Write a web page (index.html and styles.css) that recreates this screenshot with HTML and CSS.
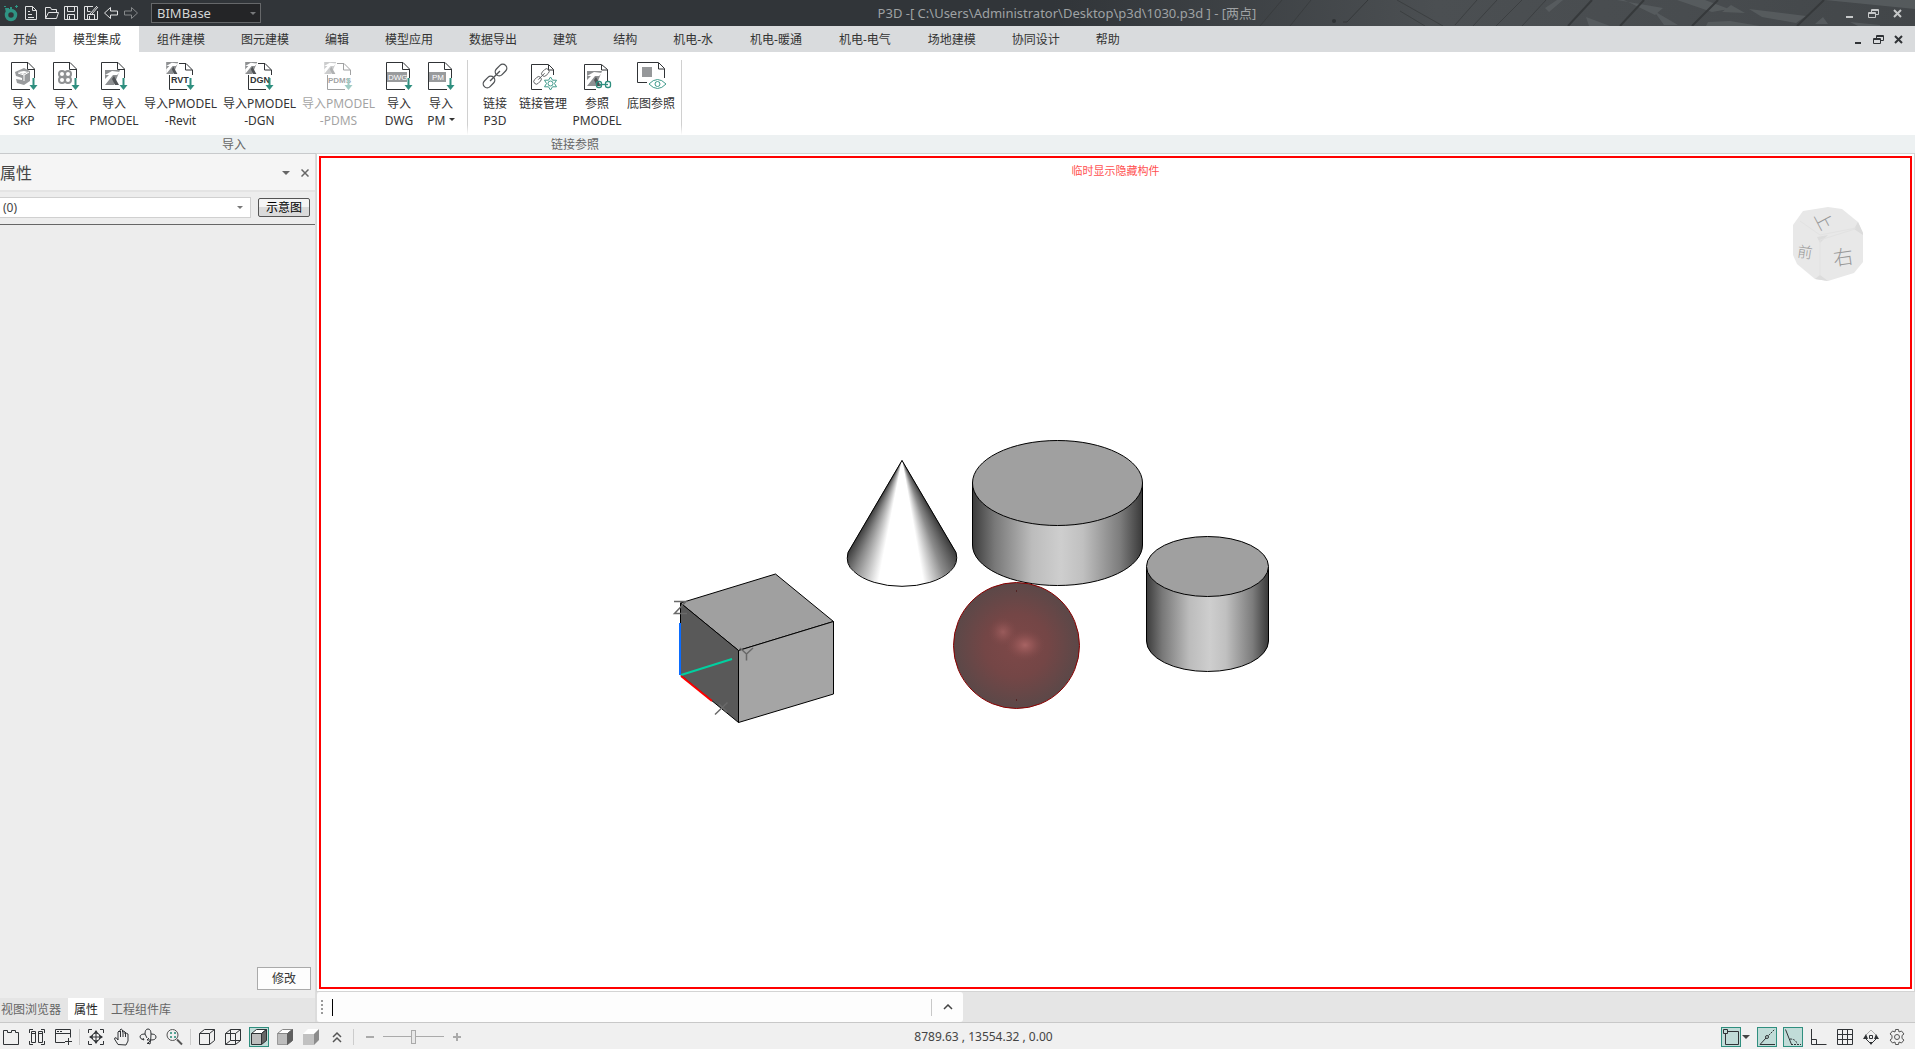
FILE: index.html
```html
<!DOCTYPE html>
<html lang="zh-CN">
<head>
<meta charset="utf-8">
<title>P3D - BIMBase</title>
<link rel="stylesheet" href="styles.css">
</head>
<body>
<svg class="defs" width="0" height="0" aria-hidden="true">
  <defs>
    <g id="arrow-down"><path d="M23.500 16v9" stroke="#2f8f7f" stroke-width="2"/><path d="M19.500 23h8l-4 5z" fill="#2f8f7f"/></g>
    <g id="page"><path d="M20 27.500H1.500V.500H18L24.500 7v9M17.500 1v6.500H24" fill="none" stroke="#303336"/></g>
    <g id="hammer"><path d="M0 0h15L9 15H0z" fill="#8e9092"/><path d="M0 5l7-4 8 1-3 3-4 0-8 10V9l4-4z" fill="#fff"/><path d="M9 6l5 9h-4L7 9z" fill="#505356"/></g>
    <g id="restore"><path d="M3.500 3V.500h7v5H8M.500 3.500h7v5h-7zM3 1.500h8M0 4.500h8" fill="none" stroke="currentColor"/></g>
    <g id="link"><g transform="translate(13 13) rotate(-45)" fill="none" stroke="#505356" stroke-width="1.300"><rect x="-15" y="-4" width="13" height="8" rx="4"/><rect x="2" y="-4" width="13" height="8" rx="4"/><path d="M-7 0H7"/></g></g>
    <g id="tagged-page"><path d="M12 1.500h7L25.500 8v5M18.500 1v7H25M2.500 13v14.500H20" fill="none" stroke="#303336"/><g transform="scale(.8)"><use href="#hammer" x="-1" y="0"/></g></g>
    <linearGradient id="cyl"><stop offset="0" stop-color="#3c3c3c"/><stop offset=".13" stop-color="#787878"/><stop offset=".35" stop-color="#bcbcbc"/><stop offset=".52" stop-color="#cecece"/><stop offset=".65" stop-color="#c0c0c0"/><stop offset=".87" stop-color="#7c7c7c"/><stop offset="1" stop-color="#393939"/></linearGradient>
    <radialGradient id="ball"><stop offset="0" stop-color="#7e4848"/><stop offset=".5" stop-color="#744646"/><stop offset="1" stop-color="#5b4848"/></radialGradient>
    <radialGradient id="shine"><stop offset="0" stop-color="#a86464"/><stop offset=".4" stop-color="#985858" stop-opacity=".7"/><stop offset="1" stop-color="#7e4848" stop-opacity="0"/></radialGradient>
  </defs>
</svg>

<header class="titlebar">
  <svg class="titlebar-art" viewBox="0 0 700 26" preserveAspectRatio="xMaxYMid slice" aria-hidden="true">
    <g fill="#5a5f62"><path d="M402 0l46 8-8 7-31-15zM462 0h28l24 9-17 3zM507 12l9-7 14 8zM534 9l57 7-10 7-34-6zM493 22l22-1 30 5h-54zM610 0h90v9zM600 24l8-7 5 7zM635 22l30 3v1h-22zM439 11l24 14h-14zM371 17l24 9h-21zM330 8l12-8 6 0-14 12z" opacity=".8"/></g>
    <g fill="none" stroke="#36393b"><path d="M185 11l25 15M240 25l22-25M258 26l24-26M281 26l26-26M307 26l24-26M96 0L75 26M67 0L45 26M182 0l46 26" opacity=".7"/><path d="M353 26l24-26M405 26l24-26M477 26l26-26M582 26l27-26" stroke-width="2"/><path d="M128 22h4l21-22" stroke-width="1"/></g>
    <circle cx="119" cy="21" r="2" fill="#303336"/>
  </svg>
  <div class="quick">
    <svg class="logo" width="20" height="20" viewBox="0 0 20 20" aria-label="BIMBase"><circle cx="10" cy="12" r="4.500" fill="none" stroke="#2f9483" stroke-width="3.500"/><path d="M4 5h4v5H5zM3 3h2v1H3zM9 4h2v2H9zM14 3h3v1h-3zM15 2h1v3h-1z" fill="#2f9483"/></svg>
    <button aria-label="新建"><svg width="20" height="20" viewBox="0 0 20 20"><path d="M4.500 3.500h7l4 4v9h-11zM11.500 3.500v4h4M7 8.500h2M7 11.500h4M7 14.500h6"/></svg></button>
    <button aria-label="打开"><svg width="20" height="20" viewBox="0 0 20 20"><path d="M4.500 15.500v-11h5l1 2h5v3M4.500 15.500l3-6h10l-2 6z"/></svg></button>
    <button aria-label="保存"><svg width="20" height="20" viewBox="0 0 20 20"><path d="M3.500 3.500h13v13h-13zM6.500 3.500v5h7v-5M6.500 16.500v-5h7v5M8.500 13v3"/></svg></button>
    <button aria-label="另存为"><svg width="20" height="20" viewBox="0 0 20 20"><path d="M12 3.500H3.500v13h13V8M6.500 3.500v5h3M6.500 16.500v-5h7v5M8.500 13v3M9 11l7-8M11 11l6-7"/></svg></button>
    <button aria-label="撤销"><svg width="20" height="20" viewBox="0 0 20 20"><path d="M3.500 10l6-5.500v3.500h7v4h-7v3.500z"/></svg></button>
    <button class="dim" aria-label="重做"><svg width="20" height="20" viewBox="0 0 20 20"><path d="M16.500 10l-6-5.500v3.500h-7v4h7v3.500z"/></svg></button>
  </div>
  <div class="pick pick-dark"><select aria-label="平台"><option>BIMBase</option></select><span class="caret"></span></div>
  <h1 class="doc-title">P3D -[ C:\Users\Administrator\Desktop\p3d\1030.p3d ] - [两点]</h1>
  <div class="win win-app">
    <button aria-label="最小化"><svg width="11" height="9" viewBox="0 0 11 9"><path d="M2 7h7v2H2z" fill="currentColor"/></svg></button>
    <button aria-label="还原"><svg width="11" height="9" viewBox="0 0 11 9"><use href="#restore"/></svg></button>
    <button aria-label="关闭"><svg width="9" height="9" viewBox="0 0 9 9"><path d="M1 1l7 7M8 1L1 8" stroke="currentColor" stroke-width="2"/></svg></button>
  </div>
</header>

<nav class="menu">
  <div class="menu-tabs">
    <button class="first">开始</button><button class="on">模型集成</button><button>组件建模</button><button>图元建模</button><button>编辑</button><button>模型应用</button><button>数据导出</button><button>建筑</button><button>结构</button><button class="mep">机电-水</button><button class="mep">机电-暖通</button><button class="mep">机电-电气</button><button>场地建模</button><button>协同设计</button><button>帮助</button>
  </div>
  <div class="win win-doc">
    <button aria-label="最小化文档"><svg width="11" height="9" viewBox="0 0 11 9"><path d="M2 7h6v2H2z" fill="currentColor"/></svg></button>
    <button aria-label="还原文档"><svg width="11" height="9" viewBox="0 0 11 9"><use href="#restore"/></svg></button>
    <button aria-label="关闭文档"><svg width="9" height="9" viewBox="0 0 9 9"><path d="M1 1l7 7M8 1L1 8" stroke="currentColor" stroke-width="2"/></svg></button>
  </div>
</nav>

<section class="ribbon">
  <div class="group group-import">
    <div class="tools">
      <button class="tool w-s"><svg width="28" height="28" viewBox="0 0 28 28"><use href="#page"/><path d="M5 10l9-4 6 3v10l-6 4-7-2-1-4 6 1v-2l-6-2zM8 10l5 2 5-2-4-1z" fill="#999b9d"/><path d="M8 11l6 2v6M14 13l5-3" fill="none" stroke="#fff"/><use href="#arrow-down"/></svg><span>导入<br>SKP</span></button>
      <button class="tool w-s"><svg width="28" height="28" viewBox="0 0 28 28"><use href="#page"/><g fill="none" stroke="#8f9193" stroke-width="2"><circle cx="10" cy="12" r="3"/><circle cx="16" cy="12" r="3"/><circle cx="10" cy="18" r="3"/><circle cx="16" cy="18" r="3"/></g><use href="#arrow-down"/></svg><span>导入<br>IFC</span></button>
      <button class="tool w-m"><svg width="28" height="28" viewBox="0 0 28 28"><use href="#page"/><use href="#hammer" x="5" y="8"/><use href="#arrow-down"/></svg><span>导入<br>PMODEL</span></button>
      <button class="tool w-l"><svg width="28" height="28" viewBox="0 0 28 28"><use href="#tagged-page"/><text class="badge" x="4" y="21">RVT</text><use href="#arrow-down"/></svg><span>导入PMODEL<br>-Revit</span></button>
      <button class="tool w-l"><svg width="28" height="28" viewBox="0 0 28 28"><use href="#tagged-page"/><text class="badge" x="4" y="21">DGN</text><use href="#arrow-down"/></svg><span>导入PMODEL<br>-DGN</span></button>
      <button class="tool w-l" disabled><svg width="28" height="28" viewBox="0 0 28 28"><use href="#tagged-page"/><text class="badge badge-s" x="3" y="21">PDMS</text><use href="#arrow-down"/></svg><span>导入PMODEL<br>-PDMS</span></button>
      <button class="tool w-s"><svg width="28" height="28" viewBox="0 0 28 28"><use href="#page"/><path d="M2 10h20v10H2z" fill="#999b9d"/><text class="badge badge-w" x="3" y="18">DWG</text><use href="#arrow-down"/></svg><span>导入<br>DWG</span></button>
      <button class="tool w-s"><svg width="28" height="28" viewBox="0 0 28 28"><use href="#page"/><path d="M2 10h17v10H2z" fill="#999b9d"/><text class="badge badge-w" x="5" y="18">PM</text><use href="#arrow-down"/></svg><span>导入<br>PM <i class="caret"></i></span></button>
    </div>
    <h2>导入</h2>
  </div>
  <div class="group group-link">
    <div class="tools">
      <button class="tool w-s"><svg width="28" height="28" viewBox="0 0 28 28"><use href="#link" x="1" y="1"/></svg><span>链接<br>P3D</span></button>
      <button class="tool w-m"><svg width="28" height="28" viewBox="0 0 28 28"><path d="M13 27.500H2.500v-25h17l5 5V13M19.500 3v5h5" fill="none" stroke="#303336"/><g transform="translate(4 6) scale(.65)"><use href="#link"/></g><path d="M21.500 15l2 3.200h4l-2 3.300 2 3.300h-4l-2 3.200-2-3.200h-4l2-3.300-2-3.300h4z" fill="#fff" stroke="#3f9a8b"/><circle cx="21.500" cy="21.500" r="2.500" fill="none" stroke="#3f9a8b"/></svg><span>链接管理</span></button>
      <button class="tool w-m"><svg width="28" height="28" viewBox="0 0 28 28"><path d="M13 27.500H1.500v-25h17l6 5V19M18.500 3v5h6" fill="none" stroke="#303336"/><use href="#hammer" x="4" y="9"/><g fill="none" stroke="#2f8f7f" stroke-width="1.300"><rect x="13.500" y="19.500" width="5" height="6" rx="2"/><rect x="22.500" y="19.500" width="5" height="6" rx="2"/><path d="M16 22.500h9"/></g></svg><span>参照<br>PMODEL</span></button>
      <button class="tool w-m"><svg width="28" height="28" viewBox="0 0 28 28"><path d="M10 20.500H.500V.500h21l6 6V16M21.500 1v6h6" fill="none" stroke="#303336"/><path d="M5 5h10v10H5z" fill="#96989a"/><path d="M12 22q8.500-9 17 0-8.500 9-17 0z" fill="#fff" stroke="#3f9a8b"/><circle cx="20.500" cy="22" r="2.500" fill="none" stroke="#3f9a8b"/></svg><span>底图参照</span></button>
    </div>
    <h2>链接参照</h2>
  </div>
</section>

<main class="work">
  <aside class="panel">
    <header class="panel-head"><h2>属性</h2>
      <button aria-label="面板选项"><span class="caret caret-l"></span></button>
      <button aria-label="关闭面板"><svg width="8" height="8" viewBox="0 0 8 8"><path d="M.500.500l7 7M7.500.500l-7 7" stroke="currentColor" stroke-width="1.500"/></svg></button>
    </header>
    <div class="filter">
      <div class="pick pick-light"><select aria-label="对象"><option>(0)</option></select><span class="caret"></span></div>
      <button class="sketch">示意图</button>
    </div>
    <div class="props"><button class="apply">修改</button></div>
    <div class="panel-tabs"><button class="t-first">视图浏览器</button><button class="on">属性</button><button class="t-last">工程组件库</button></div>
  </aside>
  <section class="stage">
    <div class="viewport">
      <svg class="scene" viewBox="321 158 1589 829" role="img" aria-label="三维模型">
        <g stroke="#000" stroke-linejoin="round">
          <path d="M680.500 603l95-29 58 47.500-95 29z" fill="#a0a0a0"/>
          <path d="M680.500 603v72l58 47.500v-72z" fill="#595959"/>
          <path d="M738.500 650.500v72l95-28.500v-72.500z" fill="#a5a5a5"/>
          <path d="M972.500 483v62a85 40.500 0 0 0 170 0v-62z" fill="url(#cyl)"/>
          <ellipse cx="1057.500" cy="483" rx="85" ry="42.500" fill="#a0a0a0"/>
          <path d="M1146.500 567v74a61 30.500 0 0 0 122 0v-74z" fill="url(#cyl)"/>
          <ellipse cx="1207.500" cy="566.500" rx="61" ry="30" fill="#a0a0a0"/>
        </g>
        <foreignObject x="847" y="460" width="110" height="127"><div class="cone"></div></foreignObject>
        <path d="M902 460.500l-54 92q-3 12 6 19a55 29 0 0 0 96 0q9-8 6-19z" fill="none" stroke="#000"/>
        <path d="M680 675v-52" stroke="#0a6cff" stroke-width="2"/>
        <path d="M681 675l51-16" stroke="#00d0a0" stroke-width="2"/>
        <path d="M681 676l31 25" stroke="#f00" stroke-width="2"/>
        <g fill="none" stroke="#696969" stroke-width="1.500"><path d="M674 601.500h12L674.500 613.500H687M740 648l6.500 6v6.500M753 648l-6.500 6M715 714.500l12.500-12M719 704l8 8"/></g>
        <circle cx="1016.500" cy="645.500" r="63" fill="url(#ball)" stroke="#8b0000"/>
        <circle cx="1003" cy="632" r="15" fill="url(#shine)" opacity=".7"/>
        <ellipse cx="1025" cy="645" rx="20" ry="16" fill="url(#shine)"/>
        <path d="M1016 591h1M1016 700h1" stroke="#400"/>
      </svg>
      <p class="notice">临时显示隐藏构件</p>
      <svg class="navcube" width="72" height="76" viewBox="0 0 72 76" role="img" aria-label="视图方块">
        <path d="M10 6l25-4 14 2 16 13 5 11v29l-9 11-26 8-13-2L4 59 0 50V20z" fill="#e8e8e8"/>
        <path d="M24 32l11-2-8 8zM61 24l4-7 5 11v2zM22 74l5-4 8 6z" fill="#dcdcdc"/>
        <path d="M27 35v35M7 16l20 14 36-7M27 35l35-11" fill="none" stroke="#e2e2e2"/>
        <text class="face" x="32" y="15" transform="rotate(62 32 15)" font-size="18">上</text>
        <text class="face" x="12" y="46" font-size="15" transform="rotate(8 12 46)">前</text>
        <text class="face" x="50" y="51" transform="rotate(-8 50 51)" font-size="20">右</text>
      </svg>
    </div>
    <div class="command-row">
      <div class="command">
        <span class="grip"></span><span class="cursor"></span>
        <input type="text" aria-label="命令">
        <button aria-label="展开历史"><svg width="10" height="6" viewBox="0 0 10 6"><path d="M1 5l4-4 4 4" fill="none" stroke="#444" stroke-width="1.500"/></svg></button>
      </div>
    </div>
  </section>
</main>

<footer class="status">
  <div class="icons">
    <button aria-label="视图"><svg width="20" height="20" viewBox="0 0 20 20"><path d="M2.500 17.500v-14h4v2h4v-2h4v2h3v12z"/></svg></button>
    <button aria-label="平铺"><svg width="20" height="20" viewBox="0 0 20 20"><path d="M2.500 6V2.500H6M14 2.500h3.500V6M2.500 14v3.500H6M14 17.500h3.500V14M4.500 4.500h4v11h-4zM11.500 4.500h4v11h-4zM4 6.500h5M11 6.500h5"/></svg></button>
    <button aria-label="新窗口"><svg width="20" height="20" viewBox="0 0 20 20"><path d="M12 15.500H2.500v-13h15v8M2.500 6.500h15M4 4.500h2M7 4.500h2M15.500 11v7M12 14.500h7"/></svg></button>
    <span class="sep"></span>
    <button aria-label="全图"><svg width="20" height="20" viewBox="0 0 20 20"><path d="M2.500 6V2.500H6M14 2.500h3.500V6M2.500 14v3.500H6M14 17.500h3.500V14M10 4v12M4 10h12"/><circle cx="10" cy="10" r="4"/><path d="M10 3l2 3H8zM10 17l2-3H8zM3 10l3-2v4zM17 10l-3-2v4z" fill="#303336" stroke="none"/></svg></button>
    <button aria-label="平移"><svg width="20" height="20" viewBox="0 0 20 20"><path d="M6 17.500L2.500 12q0-2 2-1l1.500 2V5q1-2 2 0V3q1-2 2.500 0v2q1-2 2.500 0v2q1-1.500 3 0v7l-2 4zM8.500 4v6M11 4v6M13.500 5v5"/></svg></button>
    <button aria-label="旋转"><svg width="20" height="20" viewBox="0 0 20 20"><path d="M7 7q0-5 3-5t3 5-1 10l-3-1M13 7q5 0 5 3t-5 3H9l2-2M7 7q-5 0-5 3 0 2 4 3l-1-2M7 7l2 4M9 17l3-3"/></svg></button>
    <button aria-label="缩放"><svg width="20" height="20" viewBox="0 0 20 20"><circle cx="8.500" cy="8" r="5.500" stroke="#555"/><path d="M6 5h2v2H6zM10 5h2v2h-2zM6 9h2v2H6zM10 9h2v2h-2z" fill="#56a394" stroke="none"/><path d="M13 12.500l5 5" stroke="#555" stroke-width="2"/></svg></button>
    <span class="sep"></span>
    <button aria-label="线框"><svg width="20" height="20" viewBox="0 0 20 20"><path d="M2.500 6.500h10v11h-10zM2.500 6.500l5-4h10l-5 4M17.500 2.500v11l-5 4"/></svg></button>
    <button aria-label="隐藏线"><svg width="20" height="20" viewBox="0 0 20 20"><path d="M2.500 6.500h10v11h-10zM2.500 6.500l5-4h10l-5 4M17.500 2.500v11l-5 4M7.500 2.500v11h10M7.500 13.500l-5 4"/></svg></button>
    <button class="active" aria-label="着色带边"><svg width="20" height="20" viewBox="0 0 20 20"><path d="M2.500 6.500h10v11h-10z" fill="#bdbdbd"/><path d="M2.500 6.500l5-4h10l-5 4z" fill="#fff"/><path d="M17.500 2.500v11l-5 4v-11z" fill="#666"/></svg></button>
    <button aria-label="着色"><svg width="20" height="20" viewBox="0 0 20 20"><path d="M2.500 6.500h10v11h-10z" fill="#bdbdbd" stroke="#999"/><path d="M2.500 6.500l5-4h10l-5 4z" fill="#fff" stroke="#888"/><path d="M17.500 2.500v11l-5 4v-11z" fill="#5f5f5f" stroke="#5f5f5f"/></svg></button>
    <button aria-label="真实"><svg width="20" height="20" viewBox="0 0 20 20"><g stroke="none"><path d="M2 7h11v11H2z" fill="#c1c1c1"/><path d="M2 7l5-5h11l-5 5z" fill="#fff"/><path d="M18 2v11l-5 5V7z" fill="#8c8c8c"/></g></svg></button>
    <button aria-label="更多"><svg width="20" height="20" viewBox="0 0 20 20"><path d="M6 10l4-4 4 4M6 15l4-4 4 4" stroke="#555" stroke-width="1.500"/></svg></button>
    <span class="sep"></span>
    <div class="zoom">
      <button aria-label="缩小"><svg width="20" height="20" viewBox="0 0 20 20"><path d="M6 10h8" stroke="#aaa" stroke-width="2"/></svg></button>
      <input type="range" min="0" max="100" value="50" aria-label="比例">
      <button aria-label="放大"><svg width="20" height="20" viewBox="0 0 20 20"><path d="M6 10h8M10 6v8" stroke="#aaa" stroke-width="2"/></svg></button>
    </div>
  </div>
  <output class="coords">8789.63 , 13554.32 , 0.00</output>
  <div class="icons icons-right">
    <div class="split">
      <button class="active" aria-label="对象捕捉"><svg width="20" height="20" viewBox="0 0 20 20"><path d="M2.500 2.500h4v4h-4zM7 4.500h10.500v13h-13V7"/></svg></button>
      <button class="drop" aria-label="捕捉选项"><span class="caret caret-l"></span></button>
    </div>
    <button class="active" aria-label="中点捕捉"><svg width="20" height="20" viewBox="0 0 20 20"><path d="M18 17.500H3L9 11"/><circle cx="10" cy="10" r="1.500"/><path d="M11.500 8.500l6-6" stroke-dasharray="2 1"/></svg></button>
    <button class="active" aria-label="角度捕捉"><svg width="20" height="20" viewBox="0 0 20 20"><path d="M2.500 2.500l6 15"/><path d="M8 17.500h10M7 12q6 0 7 5" stroke-dasharray="2 1"/></svg></button>
    <button aria-label="正交"><svg width="20" height="20" viewBox="0 0 20 20"><path d="M2.500 2v15.500h15M2.500 12.500h5v5"/></svg></button>
    <button aria-label="栅格"><svg width="20" height="20" viewBox="0 0 20 20"><path d="M2.500 2.500h15v15h-15zM7.500 2.500v15M12.500 2.500v15M2.500 7.500h15M2.500 12.500h15"/></svg></button>
    <button aria-label="工作面"><svg width="20" height="20" viewBox="0 0 20 20"><path d="M5 8l5-5 5 5" stroke="#aaa"/><path d="M5 12l5 5 5-5M8.500 8.500h3v3h-3z"/><path d="M2 12l3-5 2 5zM18 12l-3-5-2 5zM8 15h4l-2 3z" fill="#303336" stroke="none"/></svg></button>
    <button aria-label="设置"><svg width="20" height="20" viewBox="0 0 20 20"><path d="M8.500 2.500h3l.500 2.500 2.500-1 2.500 3-2 1.500v3l2 1.500-2.500 3-2.500-1-.500 2.500h-3L8 15l-2.500 1L3 13l2-1.500v-3L3 7l2.500-3L8 5z" stroke="#555"/><circle cx="10" cy="10" r="2.500" stroke="#555"/></svg></button>
  </div>
</footer>
</body>
</html>
```
FILE: styles.css
```css
* { box-sizing: border-box; }
body {
  margin: 0;
  min-height: 100vh;
  display: flex;
  flex-direction: column;
  background: #f0f0f0;
  color: #333;
  font: 12px/17px "Noto Sans", "Noto Sans CJK SC", sans-serif;
}
.defs { position: absolute; }
button, select, input { font: inherit; color: inherit; margin: 0; padding: 0; border: 0; background: none; outline: 0; }
h1, h2, p { margin: 0; font-weight: normal; }
svg { display: block; flex: none; }
.caret { display: inline-block; width: 0; height: 0; border: 3px solid transparent; border-top-color: currentColor; border-bottom: 0; }
.caret-l { border-width: 4px; border-bottom: 0; }

/* title bar */
.titlebar {
  position: relative;
  height: 26px;
  display: flex;
  align-items: center;
  background: linear-gradient(90deg, #313539 55%, #4b4f52 75%, #484c4f 88%, #424649);
  color: #9fa2a4;
}
.titlebar-art { position: absolute; right: 0; top: 0; width: 700px; height: 26px; }
.quick { display: flex; padding-left: 1px; }
.quick button { color: #e2e3e4; }
.quick button.dim { color: #85888a; }
.quick button svg { fill: none; stroke: currentColor; }
.pick { display: grid; align-items: center; }
.pick select { grid-area: 1 / 1; appearance: none; width: 100%; height: 100%; }
.pick .caret { grid-area: 1 / 1; justify-self: end; pointer-events: none; }
.pick-dark { width: 110px; height: 20px; margin-left: 10px; background: #242527; border: 1px solid #66686a; color: #d4d5d6; font-size: 13px; }
.pick-dark select { padding-left: 5px; }
.pick-dark .caret { margin-right: 4px; color: #77797b; }
.doc-title { flex: 1; padding-left: 36px; text-align: center; font-size: 13px; position: relative; }
.win { display: flex; position: relative; }
.win button { display: grid; place-items: center; height: 26px; }
.win-app { padding-right: 6px; color: #c6c8c9; }
.win-app button { width: 24px; }
.win-doc { padding-right: 7px; color: #303336; }
.win-doc button { width: 20px; }

/* menu tabs */
.menu { display: flex; justify-content: space-between; background: #d9dbdd; }
.menu-tabs { display: flex; }
.menu-tabs button { height: 26px; padding: 0 18px; white-space: nowrap; }
.menu-tabs .first { padding-left: 13px; }
.menu-tabs .mep { padding-right: 19px; }
.menu-tabs .on { background: #fff; }

/* ribbon */
.ribbon { display: flex; background: linear-gradient(#fff 83px, #edf1f2 83px); border-bottom: 1px solid #c8cacc; }
.group { display: flex; flex-direction: column; }
.tools { display: flex; height: 75px; margin: 8px 0 0; border-right: 1px solid #d0d0d0; border-bottom: 10px solid transparent; background-clip: padding-box; }
.group-import .tools { padding-left: 3px; width: 468px; }
.group-link .tools { padding-left: 6px; width: 214px; }
.group h2 { padding-top: 2px; font-size: 12px; line-height: 16px; text-align: center; color: #666; }
.tool { display: flex; flex-direction: column; align-items: center; gap: 5px; white-space: nowrap; padding-top: 2px; }
.tool svg { overflow: visible; }
.tool .caret { vertical-align: 4px; }
.tool:disabled { opacity: .45; }
.w-s { width: 42px; }
.w-m { width: 54px; }
.w-l { width: 79px; }
.badge { font: bold 9px "Liberation Sans", sans-serif; fill: #303336; }
.badge-s { font-size: 8px; }
.badge-w { font-size: 8px; font-weight: normal; fill: #fff; }

/* work area */
.work { flex: 1; display: flex; }
.panel { width: 315px; display: flex; flex-direction: column; background: #ededed; }
.panel-head { display: flex; align-items: center; gap: 11px; height: 38px; padding: 2px 6px 0 0; background: #f5f5f5; border-bottom: 2px solid #e4e4e4; color: #666; }
.panel-head h2 { flex: 1; font-size: 16px; line-height: 24px; color: #444; }
.panel-head button { display: flex; }
.filter { display: flex; justify-content: space-between; align-items: center; height: 33px; padding: 0 5px 2px 0; border-bottom: 1px solid #666; }
.pick-light { width: 251px; height: 21px; background: #fff; border: 1px solid #d0d0d0; border-left: 0; color: #444; }
.pick-light select { padding-left: 3px; }
.pick-light .caret { margin-right: 7px; color: #777; }
.sketch { width: 52px; height: 19px; border: 1px solid #555; border-radius: 2px; background: linear-gradient(#f4f4f4 45%, #dadada 45%); color: #000; }
.props { flex: 1; display: flex; align-items: flex-end; justify-content: flex-end; padding: 0 4px 8px; }
.apply { width: 54px; height: 23px; background: #fdfdfd; border: 1px solid #aaa; }
.panel-tabs { display: flex; height: 24px; padding-bottom: 2px; background: #e5e5e5; color: #666; }
.panel-tabs button { padding: 0 6px; }
.panel-tabs .t-first { padding: 0 7px 0 1px; }
.panel-tabs .t-last { padding: 0 7px; }
.panel-tabs .on { background: #fff; color: #222; }

.stage { flex: 1; min-width: 0; display: flex; flex-direction: column; background: #e5e5e5; border-left: 2px solid #dcdcdc; }
.viewport { flex: 1; min-height: 0; position: relative; display: flex; margin-right: 1px; background: #fff; border: 2px solid #fff; outline: 1px solid #d4d4d4; }
.viewport::after { content: ""; position: absolute; inset: 0; border: 2px solid #f00; pointer-events: none; }
.scene { flex: 1; width: 100%; min-width: 0; margin: 2px; }
.cone {
  height: 127px;
  background: conic-gradient(from 149deg at 55px 0, #333 0deg, #555 4deg, #8c8c8c 11deg, #d0d0d0 17deg, #fff 21deg, #fff 42deg, #ccc 47deg, #888 54deg, #333 62deg);
  clip-path: path("M55 0L1 92Q-2 104 7 111A55 29 0 0 0 103 111Q112 103 109 92Z");
}
.notice { position: absolute; top: 7px; left: 0; right: 0; text-align: center; color: #ff5050; font: 11px/17px "Liberation Serif", "Noto Sans CJK SC", serif; }
.navcube { position: absolute; top: 49px; right: 47px; }
.face { fill: #999; text-anchor: middle; dominant-baseline: central; font-family: "Noto Sans CJK SC", sans-serif; font-weight: 300; }
.command-row { height: 31px; padding-top: 1px; }
.command { display: flex; align-items: center; width: 646px; max-width: 100%; height: 30px; padding-left: 4px; background: #fdfdfd; border-radius: 3px; }
.grip { width: 2px; height: 14px; background: repeating-linear-gradient(#999 0 2px, transparent 2px 4px); }
.cursor { width: 1px; height: 17px; margin-left: 9px; background: #000; }
.command input { flex: 1; min-width: 0; height: 24px; }
.command button { display: grid; place-items: center; width: 32px; height: 17px; border-left: 1px solid #c8c8c8; }

/* status bar */
.status { display: grid; grid-template-columns: 1fr auto 1fr; align-items: center; height: 27px; border-top: 1px solid #c8c8c8; background: #f0f0f0; color: #444; }
.icons { display: flex; align-items: center; gap: 6px; padding: 1px 0 0 1px; }
.icons-right { justify-content: flex-end; padding-right: 8px; }
.icons button { display: grid; place-items: center; width: 20px; height: 20px; }
.icons svg { fill: none; stroke: #303336; }
.icons .active { background: #c1dcd8; box-shadow: inset 0 0 0 1px #2f8f7f; }
.sep { width: 1px; height: 16px; background: #ccc; }
.zoom, .split { display: flex; align-items: center; }
.zoom { gap: 3px; }
.icons .drop { width: 10px; }
.zoom input { appearance: none; width: 61px; height: 15px; background: linear-gradient(#aaa, #aaa) center / 100% 1px no-repeat; }
.zoom input::-webkit-slider-thumb { appearance: none; width: 5px; height: 14px; background: #e8e8e8; border: 1px solid #aaa; }
.coords { padding-left: 52px; white-space: nowrap; }
```
